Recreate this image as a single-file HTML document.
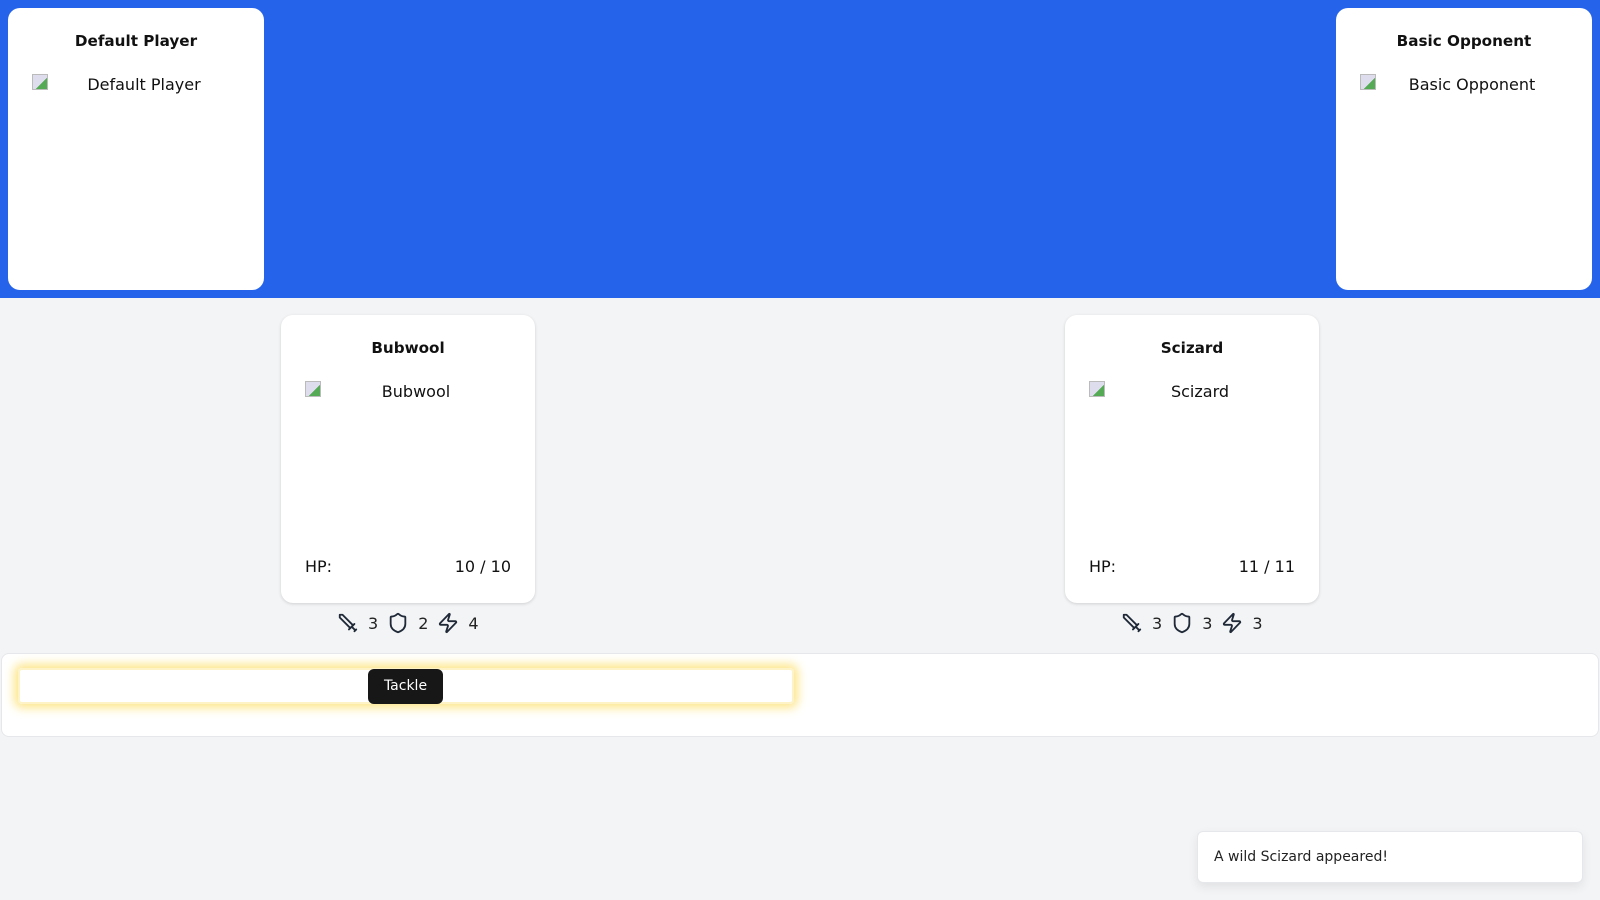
<!DOCTYPE html>
<html><head><meta charset="utf-8"><style>
*{box-sizing:border-box;margin:0;padding:0}
body{width:1600px;height:900px;background:#f3f4f6;font-family:"DejaVu Sans","Liberation Sans",sans-serif;color:#111;position:relative;overflow:hidden}
.hdr{position:absolute;left:0;top:0;width:1600px;height:298px;background:#2563eb}
.card{position:absolute;background:#fff;border-radius:12px;text-align:center}
.pc{top:8px;width:256px;height:282px}
.t{font-weight:bold;font-size:15.2px;margin-top:23px;line-height:20px}
.img{position:relative;font-size:16px;margin-top:24px;line-height:20px;padding-left:16px}
.img i{position:absolute;left:24px;top:-1px;width:16px;height:16px;border:1px solid #bbb;background:linear-gradient(135deg,#dde 60%,#5a5 60%)}
.cc{top:315px;width:254px;height:288px;box-shadow:0 1px 3px rgba(0,0,0,.15)}
.hp{position:absolute;left:24px;right:24px;top:242px;display:flex;justify-content:space-between;font-size:16px}
.stats{position:absolute;top:612px;display:flex;align-items:center;gap:9px;font-size:16px;color:#222}
.stats svg{width:22px;height:22px;fill:none;stroke:#1f2937;stroke-width:2;stroke-linecap:round;stroke-linejoin:round}
.stats span{margin-right:0}
.bar{position:absolute;left:1px;top:653px;width:1598px;height:84px;background:#fff;border:1px solid #e5e7eb;border-radius:8px}
.glow{position:absolute;left:16px;top:14px;width:776px;height:36px;border:2px solid #fef3c7;box-shadow:0 0 10px 4px #fde68a;border-radius:4px}
.btn{position:absolute;left:366px;top:15px;width:75px;height:35px;background:#171717;color:#fff;border-radius:6px;font-size:14px;line-height:35px;text-align:center}
.toast{position:absolute;left:1197px;top:831px;width:386px;height:52px;background:#fff;border:1px solid #e5e7eb;border-radius:6px;box-shadow:0 4px 10px rgba(0,0,0,.08);font-size:14px;line-height:50px;padding-left:16px;color:#222}
</style></head><body>
<div class="hdr"></div>
<div class="card pc" style="left:8px"><div class="t">Default Player</div><div class="img"><i></i>Default Player</div></div>
<div class="card pc" style="left:1336px"><div class="t">Basic Opponent</div><div class="img"><i></i>Basic Opponent</div></div>

<div class="card cc" style="left:281px"><div class="t">Bubwool</div><div class="img"><i></i>Bubwool</div><div class="hp"><span>HP:</span><span>10 / 10</span></div></div>
<div class="card cc" style="left:1065px"><div class="t">Scizard</div><div class="img"><i></i>Scizard</div><div class="hp"><span>HP:</span><span>11 / 11</span></div></div>

<div class="stats" style="left:337px">
<svg viewBox="0 0 24 24"><path d="M14.5 17.5 3 6V3h3l11.5 11.5"/><path d="m13 19 6-6"/><path d="m16 16 4 4"/><path d="m19 21 2-2"/></svg><span>3</span>
<svg viewBox="0 0 24 24"><path d="M20 13c0 5-3.5 7.5-7.660 8.95a1 1 0 0 1-.67-.01C7.5 20.5 4 18 4 13V6a1 1 0 0 1 1-1c2 0 4.5-1.2 6.24-2.720a1.17 1.17 0 0 1 1.52 0C14.51 3.81 17 5 19 5a1 1 0 0 1 1 1z"/></svg><span>2</span>
<svg viewBox="0 0 24 24"><path d="M4 14a1 1 0 0 1-.78-1.63l9.9-10.2a.5.5 0 0 1 .86.46l-1.92 6.02A1 1 0 0 0 13 10h7a1 1 0 0 1 .78 1.63l-9.9 10.2a.5.5 0 0 1-.86-.46l1.92-6.02A1 1 0 0 0 11 14z"/></svg><span>4</span>
</div>
<div class="stats" style="left:1121px">
<svg viewBox="0 0 24 24"><path d="M14.5 17.5 3 6V3h3l11.5 11.5"/><path d="m13 19 6-6"/><path d="m16 16 4 4"/><path d="m19 21 2-2"/></svg><span>3</span>
<svg viewBox="0 0 24 24"><path d="M20 13c0 5-3.5 7.5-7.660 8.95a1 1 0 0 1-.67-.01C7.5 20.5 4 18 4 13V6a1 1 0 0 1 1-1c2 0 4.5-1.2 6.24-2.720a1.17 1.17 0 0 1 1.52 0C14.51 3.81 17 5 19 5a1 1 0 0 1 1 1z"/></svg><span>3</span>
<svg viewBox="0 0 24 24"><path d="M4 14a1 1 0 0 1-.78-1.63l9.9-10.2a.5.5 0 0 1 .86.46l-1.92 6.02A1 1 0 0 0 13 10h7a1 1 0 0 1 .78 1.63l-9.9 10.2a.5.5 0 0 1-.86-.46l1.92-6.02A1 1 0 0 0 11 14z"/></svg><span>3</span>
</div>

<div class="bar"><div class="glow"></div><div class="btn">Tackle</div></div>
<div class="toast">A wild Scizard appeared!</div>
</body></html>
